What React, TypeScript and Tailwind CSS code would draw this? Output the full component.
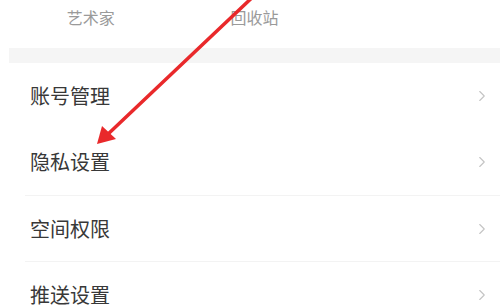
import { ChevronRight } from 'lucide-react';

const rows = ['账号管理', '隐私设置', '空间权限', '推送设置'];

export default function App() {
  return (
    <div
      className="relative h-[307px] w-[500px] overflow-hidden bg-white"
      style={{ fontFamily: '"Noto Sans CJK SC", "Noto Sans", sans-serif' }}
    >
      <div className="grid h-[48px] grid-cols-3 pl-[9px]">
        <div className="pt-[3px] text-center text-[16px] leading-[28px] text-[#9a9a9a]">艺术家</div>
        <div className="pt-[3px] text-center text-[16px] leading-[28px] text-[#9a9a9a]">回收站</div>
        <div />
      </div>
      <div className="ml-[9px] h-[15px] bg-[#f5f5f5]" />

      <div className="flex flex-col">
        {rows.map((r, i) => (
          <div key={r} className="pl-[25px]">
            <div
              className={
                'flex h-[66px] items-center justify-between pl-[5px] pr-[9px] ' +
                (i >= 2 ? 'border-t border-[#f3f3f3]' : '')
              }
            >
              <span className="text-[20px] leading-none text-[#383838]">{r}</span>
              <ChevronRight className="h-[18px] w-[18px] text-[#c4c4c4]" strokeWidth={1.5} />
            </div>
          </div>
        ))}
      </div>

      <svg className="pointer-events-none absolute left-0 top-0" width="500" height="307">
        <line x1="258" y1="-8" x2="106" y2="136" stroke="#e9292b" strokeWidth="3.5" strokeLinecap="round" />
        <polygon points="97,144 102,126 116,139" fill="#e9292b" />
      </svg>
    </div>
  );
}
